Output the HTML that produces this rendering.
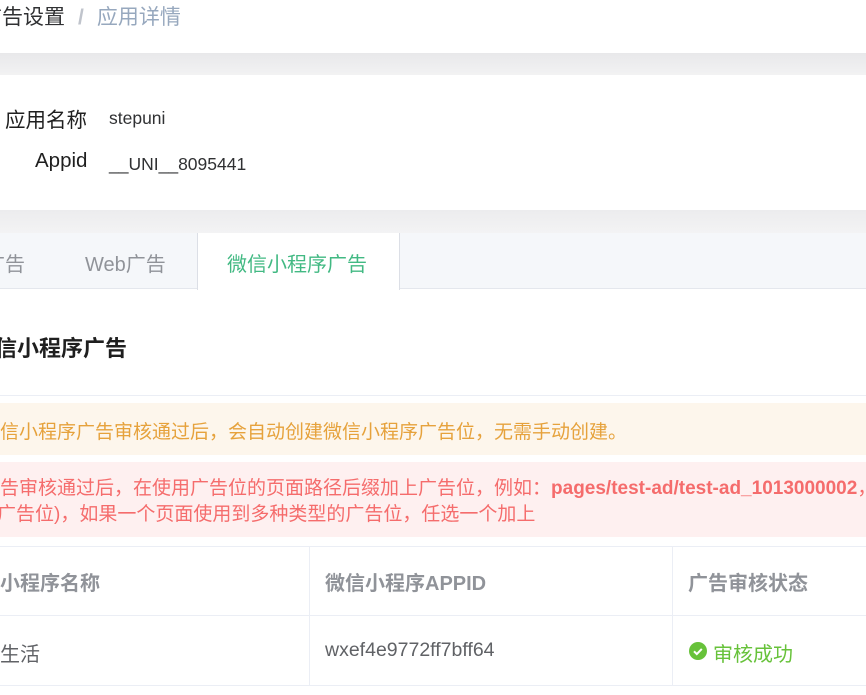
<!DOCTYPE html>
<html><head><meta charset="utf-8">
<style>
*{margin:0;padding:0;box-sizing:border-box}
body{width:866px;height:695px;overflow:hidden;background:#fff;font-family:"Liberation Sans","Noto Sans CJK SC",sans-serif;position:relative}
.a{position:absolute;white-space:nowrap}
</style></head><body>
<div class="a" style="left:-19px;top:4px;font-size:21px;line-height:27px;color:#303133">广告设置<span style="color:#c0c4cc;margin:0 13px;font-weight:bold">/</span><span style="color:#97a8be">应用详情</span></div>

<div class="a" style="left:0;top:53px;width:866px;height:22px;background:linear-gradient(#e8e8ea,#f2f2f3)"></div>
<div class="a" style="left:0;top:210px;width:866px;height:23px;background:linear-gradient(#ececee,#f3f3f4)"></div>

<div class="a" style="left:5px;top:103px;font-size:20.5px;color:#1f1f1f">应用名称</div>
<div class="a" style="left:109px;top:108px;font-size:17.5px;color:#303133">stepuni</div>
<div class="a" style="left:35px;top:149px;font-size:20.5px;color:#1f1f1f">Appid</div>
<div class="a" style="left:109px;top:154px;font-size:17.5px;color:#303133">__UNI__8095441</div>

<div class="a" style="left:0;top:233px;width:866px;height:56px;background:#f5f7fa;border-bottom:1px solid #e4e7ed"></div>
<div class="a" style="left:-15px;top:248px;font-size:20px;color:#909399">广告</div>
<div class="a" style="left:85px;top:248px;font-size:20px;color:#909399">Web广告</div>
<div class="a" style="left:197px;top:233px;width:203px;height:57px;background:#fff;border-left:1px solid #dcdfe6;border-right:1px solid #dcdfe6"></div>
<div class="a" style="left:227px;top:248px;font-size:20px;color:#42b983">微信小程序广告</div>

<div class="a" style="left:-27px;top:331px;font-size:22px;font-weight:bold;color:#1f1f1f">微信小程序广告</div>
<div class="a" style="left:0;top:395px;width:866px;height:1px;background:#ebeef5"></div>

<div class="a" style="left:0;top:403px;width:866px;height:52px;background:#fdf6ec"></div>
<div class="a" style="left:-19px;top:417px;font-size:19px;color:#e6a23c">微信小程序广告审核通过后，会自动创建微信小程序广告位，无需手动创建。</div>

<div class="a" style="left:0;top:462px;width:866px;height:75px;background:#fef0f0"></div>
<div class="a" style="left:-19px;top:473px;font-size:19px;color:#f56c6c">广告审核通过后，在使用广告位的页面路径后缀加上广告位，例如：<b>pages/test-ad/test-ad_1013000002</b>，</div>
<div class="a" style="left:-22px;top:499px;font-size:19px;color:#f56c6c">（广告位)，如果一个页面使用到多种类型的广告位，任选一个加上</div>

<div class="a" style="left:0;top:546px;width:866px;height:1px;background:#ebeef5"></div>
<div class="a" style="left:0;top:615px;width:866px;height:1px;background:#ebeef5"></div>
<div class="a" style="left:0;top:685px;width:866px;height:1px;background:#ebeef5"></div>
<div class="a" style="left:309px;top:546px;width:1px;height:140px;background:#ebeef5"></div>
<div class="a" style="left:672px;top:546px;width:1px;height:140px;background:#ebeef5"></div>

<div class="a" style="left:-20px;top:567px;font-size:20px;font-weight:bold;color:#909399">微小程序名称</div>
<div class="a" style="left:325px;top:567px;font-size:20px;font-weight:bold;color:#909399">微信小程序APPID</div>
<div class="a" style="left:688px;top:567px;font-size:20px;font-weight:bold;color:#909399">广告审核状态</div>

<div class="a" style="left:0;top:638px;font-size:20px;color:#606266">生活</div>
<div class="a" style="left:325px;top:639px;font-size:19.5px;color:#606266">wxef4e9772ff7bff64</div>
<svg class="a" style="left:689px;top:642px" width="18" height="18" viewBox="0 0 18 18"><circle cx="9" cy="9" r="9" fill="#67c23a"/><path d="M5 9.3l2.8 2.8 5-5.2" stroke="#fff" stroke-width="2" fill="none"/></svg>
<div class="a" style="left:713px;top:638px;font-size:20px;color:#67c23a">审核成功</div>
</body></html>
